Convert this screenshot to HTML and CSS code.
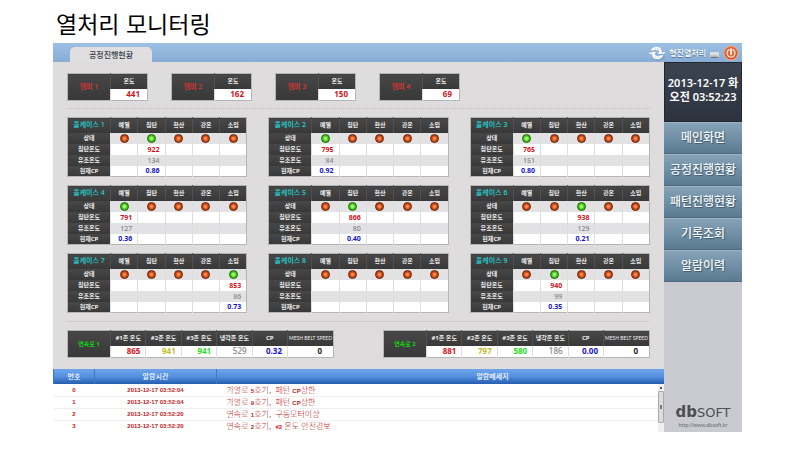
FILE: index.html
```html
<!DOCTYPE html>
<html lang="ko">
<head>
<meta charset="utf-8">
<title>열처리 모니터링</title>
<link rel="stylesheet" href="styles.css">
</head>
<body>
<h1 class="title">열처리 모니터링</h1>
<div class="app">
  <header class="topbar">
    <a class="tab" href="#process">공정진행현황</a>
    <div class="brand">
      <svg class="brand-mark" viewBox="0 0 48 48" aria-hidden="true">
        <g fill="none" stroke="#5f7fa3" stroke-width="5" opacity=".45" transform="translate(2 2)">
          <path d="M4 17C10 5 30 3 37 16c3 7-4 12-9 7"/><path d="M44 31c-6 12-26 14-33 1-3-7 4-12 9-7"/>
        </g>
        <path d="M5 17C10 2 33 1 38 15c4 10-6 16-13 9 5 1 7-2 5-5-5-6-14-3-25-2z" fill="#fff"/>
        <path d="M43 31C38 46 15 47 10 33c-4-10 6-16 13-9-5-1-7 2-5 5 5 6 14 3 25 2z" fill="#fff"/>
        <path d="M1 26c4-3 9-3 14-2M47 22c-4 3-9 3-14 2" fill="none" stroke="#fff" stroke-width="4"/>
        <path d="M16 10l8 7M25 9l6 6M24 32l8 7M17 34l6 5" stroke="#8fb0d4" stroke-width="2"/>
      </svg>
      <span class="brand-name">형진열처리</span>
      <button class="minimize" aria-label="최소화"></button>
      <button class="power" aria-label="종료">
        <svg viewBox="0 0 48 48" aria-hidden="true">
          <defs><radialGradient id="pw" cx=".5" cy=".35" r=".6"><stop offset="0" stop-color="#f07440"/><stop offset="1" stop-color="#cf4a1c"/></radialGradient></defs>
          <circle cx="24" cy="24" r="21" fill="url(#pw)" stroke="#e2a48c" stroke-width="4"/>
          <path d="M18 14a12 12 0 1 0 12 0" fill="none" stroke="#fbe0d4" stroke-width="4" stroke-linecap="round"/>
          <path d="M24 12v16" stroke="#fff" stroke-width="5" stroke-linecap="round"/>
        </svg>
      </button>
    </div>
  </header>
  <div class="body">
    <main class="main">
      <div class="panel">
        <section class="tempers" id="tempers"></section>
        <section class="cases" id="cases"></section>
        <section class="lines" id="lines"></section>
      </div>
      <section class="alarms">
        <table class="alarm-table">
          <colgroup><col class="c-no"><col class="c-time"><col></colgroup>
          <thead><tr><th>번호</th><th>알람시간</th><th>알람메세지</th></tr></thead>
          <tbody>
            <tr><td>0</td><td>2013-12-17 03:52:04</td><td>가열로 <b>5</b>호기, &nbsp;패턴 <b>CP</b>상한</td></tr>
            <tr><td>1</td><td>2013-12-17 03:52:04</td><td>가열로 <b>9</b>호기, &nbsp;패턴 <b>CP</b>상한</td></tr>
            <tr><td>2</td><td>2013-12-17 03:52:20</td><td>연속로 <b>1</b>호기, &nbsp;구동모터이상</td></tr>
            <tr><td>3</td><td>2013-12-17 03:52:20</td><td>연속로 <b>2</b>호기, &nbsp;<b class="hot">#2</b> 온도 안전경보</td></tr>
          </tbody>
        </table>
        <div class="scroll" aria-hidden="true"><span class="arrow"></span><span class="thumb"></span></div>
      </section>
    </main>
    <aside class="side">
      <div class="clock">2013-12-17 화<br>오전 03:52:23</div>
      <nav class="menu">
        <button>메인화면</button>
        <button>공정진행현황</button>
        <button>패턴진행현황</button>
        <button>기록조회</button>
        <button>알람이력</button>
      </nav>
      <div class="vendor">
        <div class="logo">db<span>SOFT</span></div>
        <a href="#vendor">http://www.dbsoft.kr</a>
      </div>
    </aside>
  </div>
</div>
<script src="app.js"></script>
</body>
</html>
```
FILE: styles.css
```css
* { box-sizing: border-box; }
body {
  margin: 0;
  padding: 7px 58px 0 53px;
  background: #fff;
  font-family: "Noto Sans", "Noto Sans CJK KR", sans-serif;
  font-size: 6px;
  color: #222;
}
button { border: 0; padding: 0; font-family: inherit; cursor: pointer; }
a { color: inherit; text-decoration: none; }
table { border-collapse: collapse; table-layout: fixed; width: 100%; }
th, td { padding: 0; overflow: hidden; white-space: nowrap; }

.title {
  margin: 0 0 4px 3px;
  font: 400 23px/32px "Noto Sans CJK KR", sans-serif;
  color: #000;
}

/* top bar */
.topbar {
  display: flex;
  justify-content: space-between;
  align-items: flex-end;
  height: 19px;
  padding: 0 3px 0 17px;
  background: linear-gradient(#9cc0e2, #88add6);
}
.tab {
  width: 82px;
  border-radius: 5px 5px 0 0;
  background: #e0dedf;
  font-size: 8px;
  line-height: 15px;
  font-weight: 500;
  text-align: center;
  color: #333c48;
}
.brand { display: flex; align-items: center; height: 19px; gap: 4px; }
.brand-mark { width: 16px; height: 16px; }
.brand-name { font-size: 8px; font-weight: 500; color: #fff; text-shadow: 0 1px 1px #4f6a8c; }
.minimize {
  width: 9px;
  height: 6px;
  margin-top: 5px;
  border: 1px solid #dadada;
  border-bottom-color: #777;
  background: linear-gradient(#eee, #a8acb2);
}
.power { width: 16px; height: 16px; background: none; }
.power svg { display: block; width: 16px; height: 16px; }

/* layout */
.body { display: flex; }
.main { flex: 1; min-width: 0; background: #dfdcdd; }
.panel { padding: 11px 14px; }

.tempers {
  display: grid;
  grid-template-columns: repeat(4, 81px);
  gap: 23px;
  padding-bottom: 7px;
  border-bottom: 1px dotted #bdbbbc;
}
.cases {
  display: grid;
  grid-template-columns: repeat(3, 1fr);
  gap: 8px 21px;
  padding: 8px 0;
  border-bottom: 1px dotted #bdbbbc;
}
.lines { display: flex; justify-content: space-between; padding-top: 8px; }
.lines table { width: 267px; }

/* data tables */
.data { border: 1px solid #b5b5b5; background: #fff; }
.data th {
  height: 11px;
  background: linear-gradient(#474747, #383838);
  color: #eee;
  font-size: 6px;
  line-height: 8px;
  font-weight: 700;
}
.data thead th { height: 15px; border-left: 1px solid #505050; }
.data thead .name { border-left: 0; color: #1ed9d9; font-size: 7px; font-weight: 500; }
.data td {
  height: 11px;
  padding-right: 5px;
  border-left: 1px solid #dedede;
  font-size: 7px;
  line-height: 9px;
  font-weight: 700;
  text-align: right;
}
.data .shade td { background: #e2e2e4; }
.data .status td { padding: 0; text-align: center; }
.label-col { width: 43px; }
.speed-col { width: 46px; }
.data.temper .name { color: #e33434; }
.data.line .name { color: #12d812; font-size: 6px; font-weight: 700; }
.data.temper td, .data.line td { height: 12px; padding-right: 7px; font-size: 8px; line-height: 10px; }
.data.line td { padding-right: 5px; }
.data.line td:last-child { padding-right: 11px; }
.data .narrow { font-family: Lato, sans-serif; font-size: 5px; font-weight: 400; }

.data .red { color: #d4141c; }
.data .gray { color: #858585; font-weight: 500; }
.data .blue { color: #1414c8; }
.data .yellow { color: #c4bc28; }
.data .green { color: #1ce01c; }

.lamp {
  display: block;
  width: 9px;
  height: 9px;
  margin: 0 auto;
  border: 1px solid #6b2c10;
  border-radius: 50%;
  background: radial-gradient(#ffa070 0 10%, #e8561c 40%, #9c3408 80%);
}
.lamp.on { border-color: #2c6a10; background: radial-gradient(#b8ff90 0 15%, #4fd820 45%, #2c9a10 85%); }

/* alarms */
.alarms { position: relative; background: #fff; }
.c-no { width: 41px; }
.c-time { width: 122px; }
.alarm-table th {
  height: 15px;
  border-left: 1px solid #4379c0;
  background: linear-gradient(#6ea4ea, #5590e0 50%, #245cae);
  color: #fff;
  font-size: 7px;
  line-height: 10px;
  font-weight: 500;
}
.alarm-table th:last-child { padding-left: 104px; }
.alarm-table td {
  height: 12px;
  border-bottom: 1px solid #efefef;
  color: #b81c22;
  font: 700 6px/10px "Liberation Sans", sans-serif;
  text-align: center;
}
.alarm-table tr:last-child td { border-bottom: 0; }
.alarm-table td:last-child {
  padding-left: 10px;
  font: 300 8px/10px "Noto Sans CJK KR", sans-serif;
  text-align: left;
}
.alarm-table b { font: 700 6px/8px "Liberation Sans", sans-serif; }
.alarm-table .hot { color: #d80c10; }
.scroll {
  position: absolute;
  top: 15px;
  right: 0;
  bottom: 0;
  width: 6px;
  padding-top: 3px;
  background: #f0f0f0;
}
.arrow { display: block; width: 2px; height: 2px; margin: 0 auto 2px; background: #555; }
.thumb {
  display: block;
  height: 32px;
  border: 1px solid #a9a9ab;
  border-radius: 1px;
  background: linear-gradient(#777, #777) center / 2px 4px no-repeat, #dcdcde;
}

/* sidebar */
.side { display: flex; flex-direction: column; width: 78px; background: #c9cbd1; }
.clock {
  height: 60px;
  padding-top: 13px;
  border: 1px solid #202730;
  background: linear-gradient(#3c4452, #2c333f);
  color: #fff;
  font-size: 11px;
  line-height: 14px;
  font-weight: 600;
  text-align: center;
  white-space: nowrap;
}
.menu { display: flex; flex-direction: column; }
.menu button {
  height: 32px;
  border-top: 1px solid #9db4c4;
  border-bottom: 1px solid #4f6c82;
  background: linear-gradient(#86a3b7, #5b7b93);
  color: #f4f7f9;
  font-size: 12px;
  font-weight: 500;
  line-height: 18px;
  white-space: nowrap;
  text-shadow: 1px 1px 1px #3f596d;
}
.vendor { margin-top: auto; padding-bottom: 3px; text-align: center; color: #666a70; font-size: 5px; line-height: 7px; }
.vendor a { display: block; }
.logo { font: 700 15px/18px "DejaVu Sans", sans-serif; color: #4c4f52; }
.logo span { font-size: 13px; font-weight: 400; }
```
FILE: app.js
```js
const STAGES = ["예열", "침탄", "확산", "강온", "소입"];
const tempers = [441, 162, 150, 69];

// stage index, carburizing temperature, oil temperature, CP
const cases = [
  [1, "922", "134", "0.86"], [0, "795", "84", "0.92"], [0, "765", "151", "0.80"],
  [0, "791", "127", "0.36"], [1, "866", "80", "0.40"], [2, "938", "129", "0.21"],
  [4, "853", "86", "0.73"], [-1, "", "", ""], [1, "940", "99", "0.35"]
];
const lines = [
  ["865", "941", "941", "529", "0.32", "0"],
  ["881", "797", "580", "186", "0.00", "0"]
];

const row = (label, value, stage, color, shade) =>
  `<tr class="${shade}"><th scope="row">${label}</th>` +
  STAGES.map((s, i) => `<td class="${color}">${i === stage ? value : ""}</td>`).join("") + "</tr>";

document.getElementById("tempers").innerHTML = tempers.map((t, i) =>
  `<table class="data temper"><colgroup><col class="label-col"><col></colgroup>
  <thead><tr><th class="name" rowspan="2">템퍼 ${i + 1}</th><th>온도</th></tr>
  <tr><td class="red">${t}</td></tr></thead></table>`
).join("");

document.getElementById("cases").innerHTML = cases.map(([stage, temp, oil, cp], n) =>
  `<table class="data"><colgroup><col class="label-col"><col span="5"></colgroup>
  <thead><tr><th class="name">올케이스 ${n + 1}</th>${STAGES.map(s => `<th>${s}</th>`).join("")}</tr></thead>
  <tbody><tr class="status shade"><th scope="row">상태</th>${STAGES.map((s, i) =>
    `<td><span class="lamp${i === stage ? " on" : ""}"></span></td>`).join("")}</tr>
  ${row("침탄온도", temp, stage, "red", "")}
  ${row("유조온도", oil, stage, "gray", "shade")}
  ${row("현재CP", cp, stage, "blue", "")}</tbody></table>`
).join("");

const LINE_COLORS = ["red", "yellow", "green", "gray", "blue", ""];
document.getElementById("lines").innerHTML = lines.map((v, n) =>
  `<table class="data line"><colgroup><col class="label-col"><col span="5"><col class="speed-col"></colgroup>
  <thead><tr><th class="name" rowspan="2">연속로 ${n + 1}</th><th>#1존 온도</th><th>#2존 온도</th><th>#3존 온도</th><th>냉각존 온도</th><th>CP</th><th class="narrow">MESH BELT SPEED</th></tr>
  <tr>${v.map((x, i) => `<td class="${LINE_COLORS[i]}">${x}</td>`).join("")}</tr></thead></table>`
).join("");
```
